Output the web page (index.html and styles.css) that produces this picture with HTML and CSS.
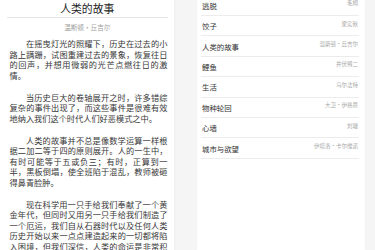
FILE: index.html
```html
<!DOCTYPE html>
<html lang="zh-CN">
<head>
<meta charset="utf-8">
<title>人类的故事</title>
<link rel="stylesheet" href="styles.css">
</head>
<body>
<div class="page">
  <section class="reader">
    <h1 class="title">人类的故事</h1>
    <div class="author">温斯顿·丘吉尔</div>
    <article class="article">
      <p>在摇曳灯光的照耀下，历史在过去的小路上蹒跚，试图重建过去的景象，恢复往日的回声，并想用微弱的光芒点燃往日的激情。</p>
      <p>当历史巨大的卷轴展开之时，许多错综复杂的事件出现了，而这些事件是很难有效地纳入我们这个时代人们好恶模式之中。</p>
      <p>人类的故事并不总是像数学运算一样根据二加二等于四的原则展开。人的一生中，有时可能等于五或负三；有时，正算到一半，黑板倒塌，使全班陷于混乱，教师被砸得鼻青脸肿。</p>
      <p>现在科学用一只手给我们奉献了一个黄金年代，但同时又用另一只手给我们制造了一个厄运，我们自从石器时代以及任何人类历史开始以来一点点建造起来的一切都将陷入困境，但我们深信，人类的命运是非常积极的。</p>
    </article>
  </section>
  <section class="shelf">
    <ul class="list">
      <li class="item"><span class="name">逃脱</span><span class="by">毛姆</span></li>
      <li class="item"><span class="name">饺子</span><span class="by">梁实秋</span></li>
      <li class="item"><span class="name">人类的故事</span><span class="by">温斯顿·丘吉尔</span></li>
      <li class="item"><span class="name">鲤鱼</span><span class="by">井伏鳟二</span></li>
      <li class="item"><span class="name">生活</span><span class="by">乌尔法特</span></li>
      <li class="item"><span class="name">物种轮回</span><span class="by">大卫·伊格曼</span></li>
      <li class="item"><span class="name">心墙</span><span class="by">刘墉</span></li>
      <li class="item"><span class="name">城市与欲望</span><span class="by">伊塔洛·卡尔维诺</span></li>
    </ul>
  </section>
</div>
</body>
</html>
```

FILE: styles.css
```css
html, body {
  margin: 0;
  padding: 0;
  background: #f5f5f5;
}
body {
  font-family: "Noto Sans CJK SC", "Noto Sans", sans-serif;
  color: #333;
}
.page {
  display: flex;
  gap: 23px;
  height: 250px;
  overflow: hidden;
}
.reader {
  width: 174px;
  box-sizing: border-box;
  padding: 0 6.5px 0 7px;
  background: #fff;
  box-shadow: 1px 0 2px rgba(0, 0, 0, 0.04);
  overflow: hidden;
}
.title {
  margin: 0;
  font-size: 10.8px;
  font-weight: 400;
  line-height: 17px;
  height: 17px;
  text-align: center;
  color: #222;
  border-bottom: 1px solid #e6e6e6;
}
.author {
  margin-top: 4px;
  font-size: 6.6px;
  line-height: 10px;
  text-align: center;
  color: #a0a0a0;
}
.article {
  margin-top: 6.25px;
  padding-left: 2.5px;
  font-size: 8.2px;
  line-height: 10.5px;
  color: #383838;
}
.article p {
  margin: 0 0 11.5px;
  text-indent: 2em;
  text-align: justify;
}
.shelf {
  width: 168px;
  box-sizing: border-box;
  padding: 0 6px 0 4px;
  background: #fff;
  box-shadow: 0 0 2px rgba(0, 0, 0, 0.04);
  overflow: hidden;
}
.list {
  list-style: none;
  margin: -4.4px 0 0;
  padding: 0;
}
.item {
  display: flex;
  justify-content: space-between;
  align-items: center;
  height: 20.4px;
  box-sizing: border-box;
  padding: 0 1px;
  border-bottom: 1px solid #ececec;
}
.name {
  font-size: 7.4px;
  color: #333;
}
.by {
  font-size: 5.5px;
  color: #a8a8a8;
  margin-bottom: 4px;
}
```
